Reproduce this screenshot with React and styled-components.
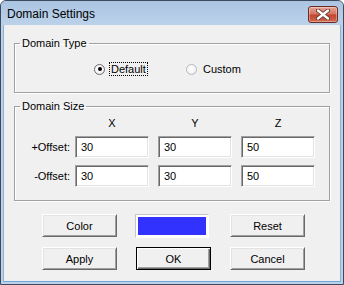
import React from 'react'
import styled, { createGlobalStyle } from 'styled-components'

const Global = createGlobalStyle`
    html, body {
        margin: 0;
        padding: 0;
        background: #ffffff;
    }
    * {
        box-sizing: border-box;
    }
`;

const Window = styled.div`
    width: 344px;
    height: 285px;
    border: 1px solid #3c4a5c;
    border-radius: 6px 6px 0 0;
    background: #bcd2ea;
    padding: 0 2px 2px 2px;
    display: flex;
    flex-direction: column;
    font-family: "Liberation Sans", Arial, sans-serif;
    font-size: 11px;
    color: #000;
    overflow: hidden;
`;

const TitleBar = styled.div`
    height: 24px;
    flex: 0 0 24px;
    margin: 0 -2px;
    padding: 0 5px 0 6px;
    display: flex;
    align-items: center;
    justify-content: space-between;
    background: linear-gradient(#aac4e2, #bcd2ea);
    border-radius: 5px 5px 0 0;
`;

const Title = styled.span`
    font-size: 12px;
    color: #000;
    margin-top: 1px;
`;

const CloseButton = styled.div`
    width: 30px;
    height: 17px;
    margin-top: 2px;
    border: 1px solid #6b2b22;
    border-radius: 3px;
    background: linear-gradient(#e8a595 0%, #d47563 45%, #c2442f 55%, #cf6b4f 100%);
    box-shadow: inset 0 0 0 1px rgba(255, 255, 255, 0.35);
    display: flex;
    align-items: center;
    justify-content: center;
`;

const Client = styled.div`
    flex: 1;
    background: #f0f0f0;
    border-left: 1px solid #8fb0d6;
    border-right: 1px solid #8fb0d6;
    border-bottom: 1px solid #6fa8dc;
    padding: 0 10px;
    display: flex;
    flex-direction: column;
`;

const Group = styled.fieldset`
    margin: ${p => p.$top}px 0 0 0;
    padding: ${p => p.$pad};
    border: 1px solid #a0a0a0;
    box-shadow: 1px 1px 0 #ffffff, inset 1px 1px 0 #ffffff;
    min-width: 0;
`;

const Legend = styled.legend`
    margin-left: 5px;
    padding: 0 2px;
    line-height: 12px;
    font-size: 11px;
`;

const RadioRow = styled.div`
    display: grid;
    grid-template-columns: 92px auto;
    align-items: center;
    height: 14px;
    padding-left: 79px;
`;

const RadioOption = styled.label`
    display: flex;
    align-items: center;
    gap: 4px;
`;

const RadioCircle = styled.span`
    width: 11px;
    height: 11px;
    border-radius: 50%;
    border: 1px solid ${p => (p.$checked ? '#6a6a6a' : '#b8b8b8')};
    background: radial-gradient(circle at 40% 40%, #ffffff 0%, #f4f4f4 60%, #dcdcdc 100%);
    display: flex;
    align-items: center;
    justify-content: center;
    &::after {
        content: '';
        width: 4px;
        height: 4px;
        border-radius: 50%;
        background: ${p => (p.$checked ? '#000' : 'transparent')};
    }
`;

const RadioText = styled.span`
    padding: 0 1px;
    line-height: 12px;
    border: 1px dotted ${p => (p.$focus ? '#000' : 'transparent')};
`;

const SizeGrid = styled.div`
    display: grid;
    grid-template-columns: 51px 74px 74px 74px;
    grid-template-rows: 11px 22px 22px;
    column-gap: 9px;
    row-gap: 7px;
    align-items: center;
`;

const AxisLabel = styled.div`
    text-align: center;
    line-height: 11px;
`;

const RowLabel = styled.div`
    text-align: right;
    margin-right: -4px;
    white-space: nowrap;
`;

const NumberBox = styled.input`
    width: 74px;
    height: 22px;
    margin: 0;
    padding: 0 0 1px 5px;
    font-family: "Liberation Sans", Arial, sans-serif;
    font-size: 11px;
    color: #000;
    background: #ffffff;
    border: 1px solid;
    border-color: #a0a0a0 #ffffff #ffffff #a0a0a0;
    box-shadow: inset 1px 1px 0 #696969, inset -1px -1px 0 #e3e3e3;
    outline: none;
`;

const ButtonGrid = styled.div`
    display: grid;
    grid-template-columns: 75px 75px 75px;
    grid-auto-rows: 23px;
    column-gap: 19px;
    row-gap: 10px;
    margin-top: 13px;
    padding-left: 28px;
`;

const Button = styled.button`
    margin: 0;
    padding: 0;
    font-family: "Liberation Sans", Arial, sans-serif;
    font-size: 11px;
    color: #000;
    background: #f0f0f0;
    border: 1px solid;
    border-color: ${p => (p.$default ? '#000' : '#ffffff #696969 #696969 #ffffff')};
    box-shadow: ${p =>
        p.$default
            ? 'inset 1px 1px 0 #ffffff, inset -1px -1px 0 #696969, inset -2px -2px 0 #a0a0a0'
            : 'inset 1px 1px 0 #e3e3e3, inset -1px -1px 0 #a0a0a0'};
`;

const Swatch = styled.div`
    margin-left: -1px;
    width: 74px;
    height: 24px;
    border: 1px solid;
    border-color: #c6c6c6 #ffffff #ffffff #c6c6c6;
    background: #ffffff;
    padding: 2px;
    &::after {
        content: '';
        display: block;
        width: 100%;
        height: 100%;
        background: ${p => p.$color};
    }
`;

const CloseIcon = () => (
    <svg width="14" height="11" viewBox="0 0 14 11">
        <path d="M2 1.5 L12 9.5 M12 1.5 L2 9.5" stroke="#5a2a24" strokeWidth="4" strokeLinecap="round" />
        <path d="M2 1.5 L12 9.5 M12 1.5 L2 9.5" stroke="#ffffff" strokeWidth="2.4" strokeLinecap="round" />
    </svg>
);

const Radio = ({ label, checked, focus }) => (
    <RadioOption>
        <RadioCircle $checked={checked} />
        <RadioText $focus={focus}>{label}</RadioText>
    </RadioOption>
);

export default function App() {
    const rows = [
        { label: '+Offset:', values: [30, 30, 50] },
        { label: '-Offset:', values: [30, 30, 50] },
    ];

    return (
        <>
            <Global />
            <Window>
                <TitleBar>
                    <Title>Domain Settings</Title>
                    <CloseButton><CloseIcon /></CloseButton>
                </TitleBar>
                <Client>
                    <Group $top={12} $pad="13px 0 16px 0">
                        <Legend>Domain Type</Legend>
                        <RadioRow>
                            <Radio label="Default" checked focus />
                            <Radio label="Custom" />
                        </RadioRow>
                    </Group>
                    <Group $top={7} $pad="6px 0 13px 0">
                        <Legend>Domain Size</Legend>
                        <SizeGrid>
                            <div />
                            <AxisLabel>X</AxisLabel>
                            <AxisLabel>Y</AxisLabel>
                            <AxisLabel>Z</AxisLabel>
                            {rows.map(r => (
                                <React.Fragment key={r.label}>
                                    <RowLabel>{r.label}</RowLabel>
                                    {r.values.map((v, i) => (
                                        <NumberBox key={i} defaultValue={v} />
                                    ))}
                                </React.Fragment>
                            ))}
                        </SizeGrid>
                    </Group>
                    <ButtonGrid>
                        <Button>Color</Button>
                        <Swatch $color="#3232ff" />
                        <Button>Reset</Button>
                        <Button>Apply</Button>
                        <Button $default>OK</Button>
                        <Button>Cancel</Button>
                    </ButtonGrid>
                </Client>
            </Window>
        </>
    )
}
